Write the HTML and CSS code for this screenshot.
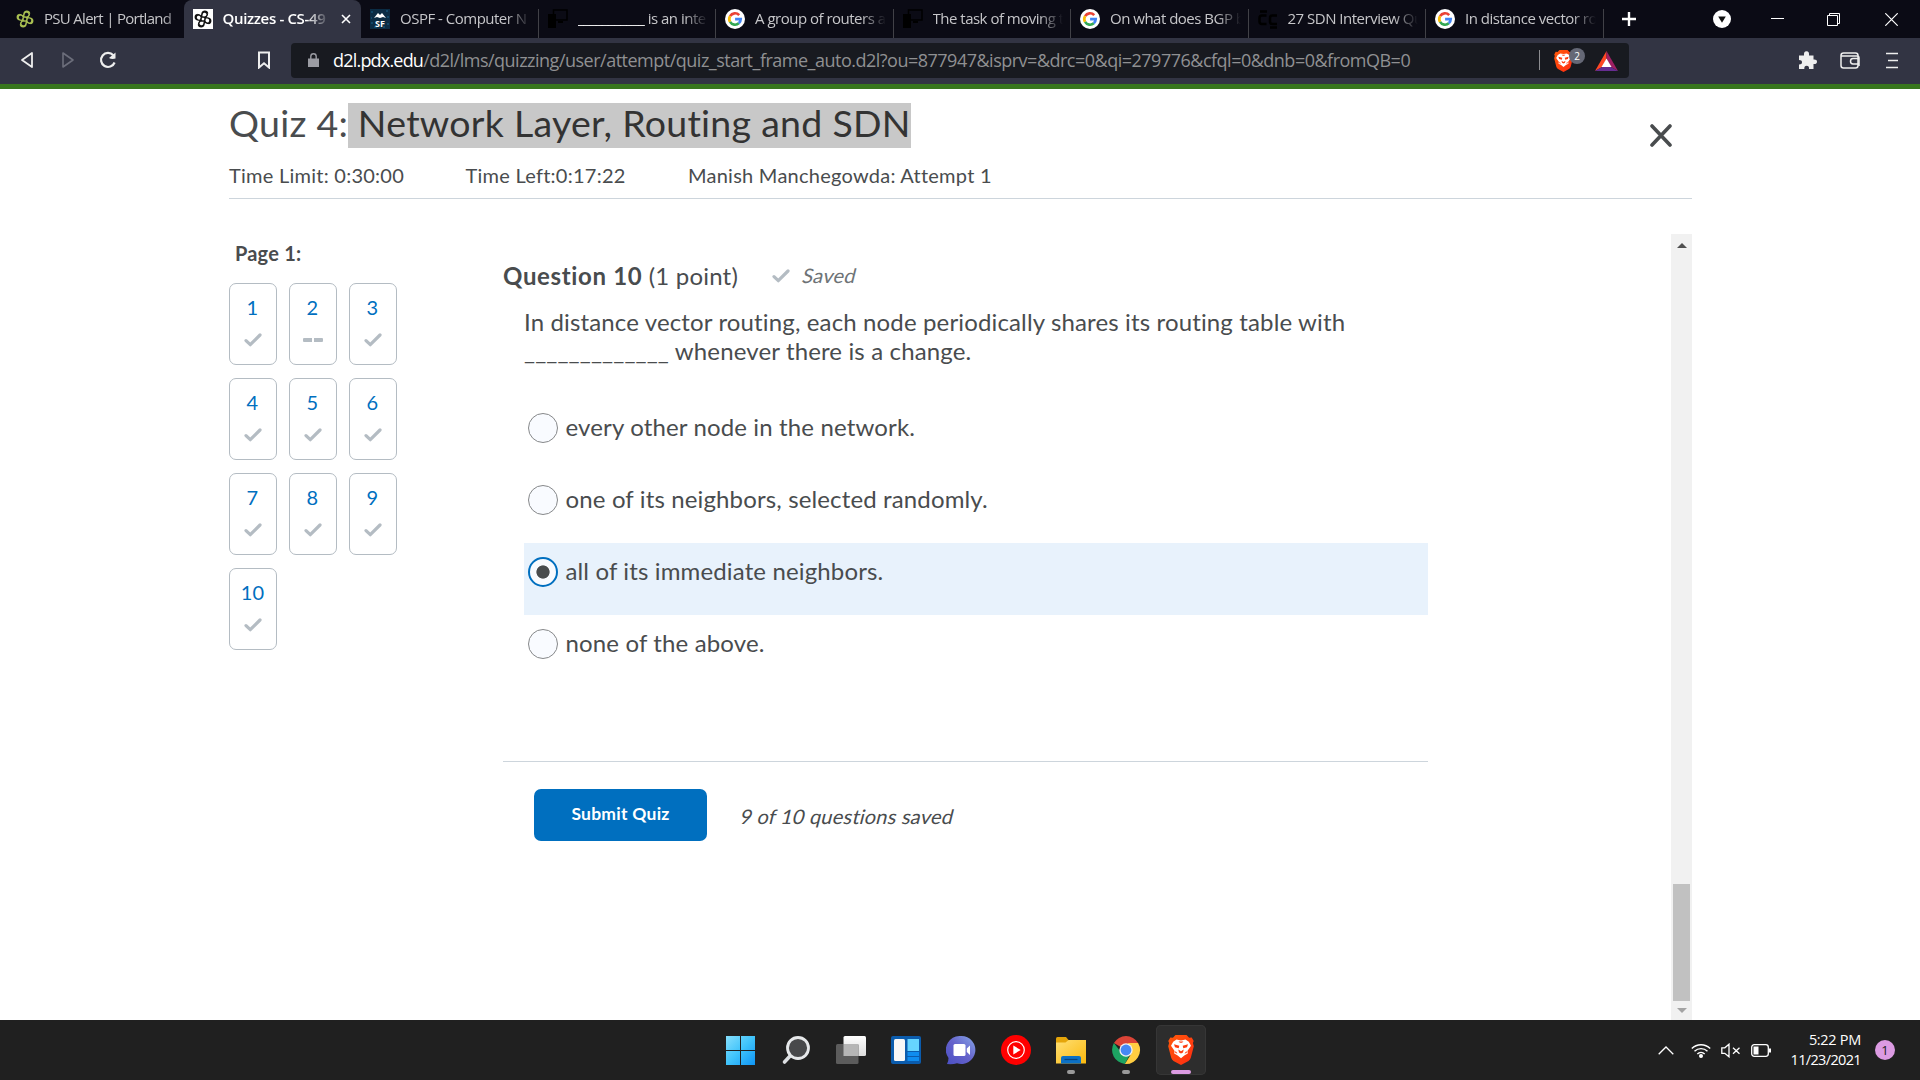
FILE: index.html
```html
<!DOCTYPE html>
<html lang="en">
<head>
<meta charset="utf-8">
<title>Quizzes - CS-49</title>
<link rel="stylesheet" href="styles.css">
</head>
<body>
<svg width="0" height="0" class="defs">
  <defs>
    <linearGradient id="win" x1="0" y1="0" x2="1" y2="1"><stop offset="0" stop-color="#86dffc"/><stop offset=".5" stop-color="#3fc3fb"/><stop offset="1" stop-color="#0f95f5"/></linearGradient>
    <linearGradient id="chat" x1="0" y1="1" x2="1" y2="0"><stop offset="0" stop-color="#4a4fc4"/><stop offset=".5" stop-color="#6562cb"/><stop offset="1" stop-color="#86a6e8"/></linearGradient>
    <linearGradient id="fold" x1="0" y1="0" x2="1" y2="1"><stop offset="0" stop-color="#ffdf74"/><stop offset="1" stop-color="#fbb90d"/></linearGradient>
    <linearGradient id="brv" x1="0" y1="0" x2="1" y2="1"><stop offset="0" stop-color="#ff5a0a"/><stop offset="1" stop-color="#ff2a12"/></linearGradient>
    <linearGradient id="paper" x1="0" y1="0" x2="0" y2="1"><stop offset="0" stop-color="#fff"/><stop offset="1" stop-color="#dcdcdc"/></linearGradient>
  </defs>
  <symbol id="google" viewBox="0 0 20 20"><circle cx="10" cy="10" r="10" fill="#fff"/><g fill="none" stroke-width="2.7"><path d="M14.2 6.1A5.7 5.7 0 0 0 5.1 7.1" stroke="#ea4335"/><path d="M5.1 7.1a5.7 5.7 0 0 0 0 5.8" stroke="#fbbc05"/><path d="M5.1 12.9a5.7 5.7 0 0 0 8.7 1.4" stroke="#34a853"/><path d="M13.8 14.3a5.7 5.7 0 0 0 1.9-4.2H10.1" stroke="#4285f4"/></g></symbol>
  <symbol id="knot" viewBox="0 0 20 20"><g fill="none" stroke="currentColor" stroke-width="1.5" transform="rotate(12 10 10)"><path d="M8 13V4.800a2.800 2.800 0 0 1 5.400-1M12 7v8.200a2.800 2.800 0 0 1-5.400 1M7 8h8.200a2.800 2.800 0 0 1 1 5.400M13 12H4.800a2.800 2.800 0 0 1-1-5.400M8 5a2.700 2.700 0 0 1 5.300 0q0 2-2.600 3.500M12 15a2.700 2.700 0 0 1-5.300 0q0-2 2.600-3.500M15 8a2.700 2.700 0 0 1 0 5.300q-2 0-3.500-2.600M5 12a2.700 2.700 0 0 1 0-5.300q2 0 3.500 2.600"/></g></symbol>
  <symbol id="devices" viewBox="0 0 20 20"><rect x="5.500" y="1" width="13.500" height="10" fill="none" stroke="#000" stroke-width="1.500"/><path d="M0 5h8v14H0zM10 12h5v2h-5z" fill="#000"/></symbol>
  <symbol id="check" viewBox="0 0 18 14"><path d="M2 7.600 6.300 11.700 16 2" fill="none" stroke="#b4bcc3" stroke-width="3.200" stroke-linecap="round" stroke-linejoin="round"/></symbol>
  <symbol id="lion" viewBox="0 0 26 30"><path d="M7.500 0h11l2.600 2.800 2.600-.4 2 3.600-.8 2 .9 3.200-3 11.500q-.6 2-2.300 3.200L13 30l-7.500-4.100q-1.700-1.200-2.300-3.200L.2 11.200l.9-3.200-.8-2 2-3.600 2.600.4z" fill="url(#brv)"/><path d="M8.500 4.600l4.500.8 4.500-.8 3.300 2.200 2.200 4-3.600 5.200.4 2.600-3.500 2-3.300 2.700-3.300-2.700-3.500-2 .4-2.600L3 10.800l2.200-4z" fill="#fff"/><path d="M6 9.300l5.300 1.400-.6 2.500-3.700-1zM20 9.300l-5.300 1.400.6 2.500 3.700-1zM10.300 14.500l2.700 1.800 2.700-1.800-.7 3-2 1-2-1zM7.500 16l2 2.500-2.300-.5zM18.500 16l-2 2.500 2.300-.5zM10.500 6.500h5l-1.500 1.200h-2z" fill="#ff3c10"/></symbol>
</svg>

<header class="browser">
  <div class="tabs">
    <div class="tab first"><svg class="fav psu"><use href="#knot"/></svg><span>PSU Alert | Portland</span></div>
    <div class="tab active"><svg class="fav psu-dark"><use href="#knot"/></svg><span>Quizzes - CS-49</span><svg class="tab-close" viewBox="0 0 10 10"><path d="M1 1l8 8M9 1 1 9"/></svg></div>
    <div class="tab"><svg class="fav" viewBox="0 0 20 20"><rect width="20" height="20" fill="#0b2c44"/><path d="M1 3h2M16 2h2M1 9h1M17 8h2M1 14h2M17 15h2M4 18h3M13 18h2" stroke="#18628c"/><path d="M4 9 8 4l2 2 2-2 4 5-3-1-3 1-3-1z" fill="#fff"/><text x="10" y="18" text-anchor="middle" class="sf">SF</text></svg><span>OSPF - Computer N</span></div>
    <div class="tab"><svg class="fav"><use href="#devices"/></svg><span><i class="blank">___________</i> is an inte</span></div>
    <div class="tab"><svg class="fav"><use href="#google"/></svg><span>A group of routers a</span></div>
    <div class="tab"><svg class="fav"><use href="#devices"/></svg><span>The task of moving t</span></div>
    <div class="tab"><svg class="fav"><use href="#google"/></svg><span>On what does BGP b</span></div>
    <div class="tab"><svg class="fav" viewBox="0 0 20 20"><path d="M8.500 6.500H4Q1.500 6.500 1.500 9v3.500Q1.500 15 4 15h4.500M19 6.500h-4.500Q12 6.500 12 9v3.500q0 2.500 2.500 2.500H19M2 2.500h7M12 18.500h7" fill="none" stroke="#000" stroke-width="2.500"/></svg><span>27 SDN Interview Qu</span></div>
    <div class="tab"><svg class="fav"><use href="#google"/></svg><span>In distance vector ro</span></div>
    <svg class="plus" viewBox="0 0 16 16"><path d="M8 1v14M1 8h14"/></svg>
    <div class="window-buttons">
      <svg width="18" height="18" viewBox="0 0 18 18"><circle cx="9" cy="9" r="9" fill="#fff"/><path d="M5.200 6.500h7.600L9 12.800z" fill="#111"/></svg>
      <svg width="13" height="14" viewBox="0 0 13 14"><path d="M0 6.500h13" stroke="#fff"/></svg>
      <svg width="13" height="13" viewBox="0 0 13 13" fill="none" stroke="#fff"><path d="M.5 2.500h10v10H.5zM2.500 2V.5h10v10H11"/></svg>
      <svg width="13" height="13" viewBox="0 0 13 13"><path d="M.3.3l12.400 12.400M12.700.3.3 12.700" stroke="#fff" stroke-width="1.200"/></svg>
    </div>
  </div>
  <div class="toolbar">
    <div class="nav">
      <svg width="14" height="18" viewBox="0 0 14 18"><path d="M12 2v14L2 9z" fill="none" stroke="#eee" stroke-width="1.800" stroke-linejoin="round"/></svg>
      <svg width="14" height="18" viewBox="0 0 14 18"><path d="M2 2v14l10-7z" fill="none" stroke="#6c6e7b" stroke-width="1.600" stroke-linejoin="round"/></svg>
      <svg width="18" height="18" viewBox="0 0 18 18"><path d="M14.300 4.300A7 7 0 1 0 15.600 11.500" fill="none" stroke="#eee" stroke-width="2.200"/><path d="M16.500 1.500v6q-3.500 1-6.500-.5z" fill="#eee"/></svg>
      <svg class="bookmark" width="14" height="18" viewBox="0 0 14 18"><path d="M2 1.500h10v15l-5-4.200-5 4.200z" fill="none" stroke="#eee" stroke-width="2"/></svg>
    </div>
    <div class="address">
      <svg class="lock" width="11" height="14" viewBox="0 0 11 14"><path d="M0 5.500h11V14H0z" fill="#9b9ca3"/><path d="M2.800 6V3.500a2.700 2.700 0 0 1 5.400 0V6" fill="none" stroke="#9b9ca3" stroke-width="1.400"/></svg>
      <span class="host">d2l.pdx.edu</span><span class="path">/d2l/lms/quizzing/user/attempt/quiz_start_frame_auto.d2l?ou=877947&amp;isprv=&amp;drc=0&amp;qi=279776&amp;cfql=0&amp;dnb=0&amp;fromQB=0</span>
      <div class="shields">
        <i class="rule"></i>
        <div class="shield"><svg width="19" height="22"><use href="#lion"/></svg><b>2</b></div>
        <svg class="bat" width="23" height="20" viewBox="0 0 23 20"><path d="M11.500 0 0 20l7-4 4.500-8z" fill="#ff4724"/><path d="M11.500 0 23 20l-7-4-4.500-8z" fill="#9e1f63"/><path d="M0 20h23l-7-4H7z" fill="#662d91"/><path d="M11.500 7.500 16.500 16h-10z" fill="#fff"/></svg>
      </div>
    </div>
    <div class="tools">
      <svg width="18" height="18" viewBox="0 0 18 18"><path d="M0 4.500h5q-.5-4.300 2.500-4.300T10 4.500h4.500v4q3.500-.3 3.500 2.200T14.500 13v5H10q.3-3.200-2.300-3.200T5.300 18H0v-4.500q3 .1 3-2.200T0 9z" fill="#eee"/></svg>
      <svg width="20" height="17" viewBox="0 0 20 17" fill="none" stroke="#eee" stroke-width="1.500"><rect x="1" y="1" width="17" height="15" rx="2.500"/><path d="M1 4h16q2 0 2 2v8M19 6.500h-6q-2.500 0-2.500 2.700T13 12h6"/></svg>
      <svg width="12" height="17" viewBox="0 0 12 17"><path d="M0 1.500h12M2 8.500h10M0 15.500h12" stroke="#eee" stroke-width="1.700"/></svg>
    </div>
  </div>
</header>

<main class="page">
  <section class="quiz-head">
    <div class="title-row">
      <h1><span>Quiz 4:</span><span class="selected">&nbsp;Network Layer, Routing and SDN</span></h1>
      <svg class="close" width="22" height="23" viewBox="0 0 22 23"><path d="M2 2l18 19M20 2 2 21" stroke="#494c4e" stroke-width="3.600" stroke-linecap="round"/></svg>
    </div>
    <div class="meta"><span class="limit">Time Limit: 0:30:00</span><span class="left">Time Left:0:17:22</span><span class="who">Manish Manchegowda: Attempt 1</span></div>
  </section>

  <div class="body">
    <aside>
      <h2>Page 1:</h2>
      <div class="cards">
        <a class="card">1<svg><use href="#check"/></svg></a>
        <a class="card">2<i class="dashes"></i></a>
        <a class="card">3<svg><use href="#check"/></svg></a>
        <a class="card">4<svg><use href="#check"/></svg></a>
        <a class="card">5<svg><use href="#check"/></svg></a>
        <a class="card">6<svg><use href="#check"/></svg></a>
        <a class="card">7<svg><use href="#check"/></svg></a>
        <a class="card">8<svg><use href="#check"/></svg></a>
        <a class="card">9<svg><use href="#check"/></svg></a>
        <a class="card">10<svg><use href="#check"/></svg></a>
      </div>
    </aside>
    <section class="question">
      <div class="q-head"><span class="q-title"><b>Question 10</b> (1 point)</span><svg width="18" height="14"><use href="#check"/></svg><em>Saved</em></div>
      <p class="q-text">In distance vector routing, each node periodically shares its routing table with<br><span class="gap">_____________</span> whenever there is a change.</p>
      <div class="options">
        <label class="option"><i class="radio"></i><span>every other node in the network.</span></label>
        <label class="option"><i class="radio"></i><span>one of its neighbors, selected randomly.</span></label>
        <label class="option chosen"><i class="radio"></i><span>all of its immediate neighbors.</span></label>
        <label class="option"><i class="radio"></i><span>none of the above.</span></label>
      </div>
      <div class="submit"><button>Submit Quiz</button><em>9 of 10 questions saved</em></div>
    </section>
    <div class="scrollbar"><i class="up"></i><i class="thumb"></i><i class="down"></i></div>
  </div>
</main>

<footer class="taskbar">
  <div class="apps">
    <div class="app"><svg viewBox="0 0 30 30"><path d="M0 1h14v14H0zM15 1h14v14H15zM0 16h14v14H0zM15 16h14v14H15z" fill="url(#win)"/></svg></div>
    <div class="app"><svg viewBox="0 0 30 30"><path d="M10.500 19.500 3.500 27" stroke="#dcdfe2" stroke-width="3.600" stroke-linecap="round"/><circle cx="17" cy="13" r="10.500" fill="#48494b" stroke="#e6e8ea" stroke-width="2.800"/></svg></div>
    <div class="app"><svg viewBox="0 0 30 30"><rect x="7.500" y="1" width="22.500" height="20" rx="1.500" fill="url(#paper)"/><rect y="9" width="22.500" height="20" rx="1.500" fill="#5c5c5c"/><path d="M7.500 9h15v12h-15z" fill="#b6b6b6"/></svg></div>
    <div class="app"><svg viewBox="0 0 30 30"><rect y="1" width="30" height="28" rx="2" fill="#0b5cad"/><rect x="3" y="4" width="11" height="22" rx="1.500" fill="#f7f7f7"/><path d="M16.500 4H28v12H16.500z" fill="#66d4ff"/><path d="M16.500 17H28v4H16.500zM16.500 22H28v4H16.500z" fill="#0f8df0"/></svg></div>
    <div class="app"><svg viewBox="0 0 30 30"><path d="M15.500 1a14 14 0 1 1-4.500 27.300Q7 29.500 1 29q1.500-2.500 1.500-6A14 14 0 0 1 15.500 1z" fill="url(#chat)"/><rect x="7.500" y="9" width="12" height="12" rx="1.500" fill="#fff"/><path d="M20.800 13.500 24 10.500v9.500l-3.200-3z" fill="#fff"/></svg></div>
    <div class="app"><svg viewBox="0 0 30 30"><circle cx="15" cy="15" r="15" fill="#f00"/><circle cx="15" cy="15" r="8.300" fill="none" stroke="#fff" stroke-width="1.200"/><path d="M12.300 10.500v9l7.400-4.500z" fill="#fff"/></svg></div>
    <div class="app"><svg viewBox="0 0 30 30"><path d="M0 3.500Q0 2 1.500 2H10l3 3.500-3 3H0z" fill="#e5a50a"/><path d="M0 7.500h9.500l3-2.500H30v23.500H0z" fill="url(#fold)"/><path d="M5 28.500V23q0-2 2-2h16q2 0 2 2v5.500z" fill="#0c70c4"/><path d="M8.500 24.500h13" stroke="#08437e" stroke-width="1.200"/></svg><i class="run"></i></div>
    <div class="app"><svg viewBox="0 0 30 30"><path d="M15 15 2.900 8a14 14 0 0 1 24.200 0z" fill="#db4437"/><path d="M2.900 8a14 14 0 0 0 11 20.900L19 19l-8-.5z" fill="#1da462"/><path d="M27.100 8a14 14 0 0 1-13.200 20.900L21 17.500 17 8z" fill="#ffcd41"/><circle cx="15" cy="15" r="6.700" fill="#f1f1f1"/><circle cx="15" cy="15" r="5.400" fill="#4688f4"/></svg><i class="run"></i></div>
    <div class="app current"><svg viewBox="-2 0 30 30"><use href="#lion" width="26" height="30"/></svg><i class="run"></i></div>
  </div>
  <div class="tray">
    <svg width="16" height="9" viewBox="0 0 16 9"><path d="M.7 8.300 8 1l7.300 7.300" fill="none" stroke="#fff" stroke-width="1.300"/></svg>
    <svg class="wifi" width="20" height="15" viewBox="0 0 20 15" fill="none" stroke="#fff" stroke-width="1.400"><path d="M.8 5.500a13 13 0 0 1 18.400 0M3.500 8.300a9.200 9.200 0 0 1 13 0M6.300 11a5.400 5.400 0 0 1 7.400 0"/><circle cx="10" cy="13" r="1.300" fill="#fff"/></svg>
    <svg class="vol" width="20" height="15" viewBox="0 0 20 15" fill="none" stroke="#fff" stroke-width="1.300"><path d="M.8 4.800h3L8 1.200v12.600l-4.200-3.500h-3zM12 4.700l6.500 6M18.500 4.700l-6.500 6"/></svg>
    <svg class="batt" width="21" height="13" viewBox="0 0 21 13"><rect x=".7" y=".7" width="16.600" height="11.600" rx="2.500" fill="none" stroke="#fff" stroke-width="1.300"/><path d="M2.500 2.500h5v8h-5zM18 4.500h2v4h-2z" fill="#fff"/></svg>
    <div class="clock"><span>5:22 PM</span><span>11/23/2021</span></div>
    <b class="notice">1</b>
  </div>
</footer>
</body>
</html>
```
FILE: styles.css
```css
* { box-sizing: border-box; }
body { margin: 0; width: 1920px; height: 1080px; overflow: hidden; display: flex; flex-direction: column; background: #fff; color: #494c4e; font-family: Lato, sans-serif; font-variant-ligatures: none; }
svg { display: block; flex: none; }
.defs { position: absolute; }
h1, h2, p { margin: 0; font-weight: 400; }

/* browser chrome */
.browser { height: 89px; flex: none; border-bottom: 5px solid #38761d; background: #323443; font-family: "Open Sans", sans-serif; }
.tabs { height: 38px; display: flex; align-items: center; padding-left: 6px; background: #0b0b15; }
.tab { width: 177.5px; height: 38px; flex: none; display: flex; align-items: center; padding: 0 8px 1px 9px; color: #c6c6c9; font-size: 15px; background: linear-gradient(#414147, #414147) right bottom / 1px 29px no-repeat; }
.tab span { flex: 1; min-width: 0; margin-left: 10px; padding-bottom: 2px; white-space: nowrap; line-height: 34px; letter-spacing: -.5px; -webkit-mask-image: linear-gradient(90deg, #000 calc(100% - 24px), transparent); mask-image: linear-gradient(90deg, #000 calc(100% - 24px), transparent); }
.tab.first { background: none; }
.tab.first span { margin-left: 9px; letter-spacing: -.7px; -webkit-mask-image: linear-gradient(90deg, #000 calc(100% - 14px), transparent calc(100% + 12px)); mask-image: linear-gradient(90deg, #000 calc(100% - 14px), transparent calc(100% + 12px)); }
.tab.active { background: #323443; color: #fff; font-weight: 600; border-radius: 8px 8px 0 0; }
.tab.active span { letter-spacing: -.35px; }
.fav { width: 20px; height: 20px; }
.psu { color: #a9bf52; }
.psu-dark { color: #111; background: #fff; }
.sf { font: bold 9px "Open Sans", sans-serif; fill: #fff; letter-spacing: 0; }
.blank { font-style: normal; color: #fff; }
.tab-close { width: 10px; height: 10px; margin: 0 2px 0 11px; stroke: #fff; stroke-width: 1.6; }
.plus { width: 16px; height: 16px; margin-left: 17px; stroke: #fff; stroke-width: 2.4; }
.window-buttons { margin-left: auto; display: flex; align-items: center; padding-right: 22px; }
.window-buttons svg:nth-child(2) { margin-left: 40px; }
.window-buttons svg:nth-child(3) { margin-left: 43px; }
.window-buttons svg:nth-child(4) { margin-left: 45px; }
.toolbar { height: 46px; display: flex; align-items: center; }
.nav { width: 291px; display: flex; align-items: center; padding: 0 0 2px 20px; }
.nav svg:nth-child(2) { margin-left: 27px; }
.nav svg:nth-child(3) { margin-left: 24px; }
.nav .bookmark { margin-left: 140px; }
.address { width: 1338px; height: 35px; margin-bottom: 1px; display: flex; align-items: center; padding: 0 0 1px 17px; border-radius: 4px; background: #181a20; font-size: 18px; line-height: 32px; white-space: nowrap; }
.host { margin-left: 14px; color: #fff; letter-spacing: -.8px; }
.path { color: #8f9092; letter-spacing: -.5px; }
.host, .path { padding-bottom: 1px; }
.shields { margin-left: auto; display: flex; align-items: center; padding-right: 11px; }
.rule { width: 1px; height: 20px; margin-right: 14px; background: #8b8c90; }
.shield { position: relative; margin-right: 22px; }
.shield b { position: absolute; left: 15px; top: -2px; width: 16px; height: 16px; border-radius: 8px; background: #656876; color: #fff; font-size: 10px; line-height: 16px; font-weight: 400; text-align: center; }
.shield, .bat { margin-top: 1px; }
.tools { margin-left: auto; display: flex; align-items: center; gap: 23px; padding: 0 22px 2px 0; }
.tools svg:last-child { margin-left: 3px; }

/* quiz header */
.page { flex: 1; display: flex; flex-direction: column; min-height: 0; padding-left: 229px; }
.quiz-head { width: 1463px; height: 110px; padding-top: 14px; border-bottom: 1px solid #cdd5dc; }
.title-row { display: flex; justify-content: space-between; align-items: flex-start; padding-right: 20px; }
h1 { display: flex; height: 45px; font-size: 37.5px; line-height: 39px; letter-spacing: .27px; white-space: nowrap; }
h1 span:first-child { width: 119px; }
.selected { width: 563px; background: #c8c8c8; color: #333; }
.close { margin-top: 21px; }
.meta { display: flex; margin-top: 15px; font-size: 20px; line-height: 24px; letter-spacing: .25px; white-space: nowrap; }
.limit { width: 236.5px; }
.left { width: 222.5px; }

/* quiz body */
.body { flex: 1; display: flex; width: 1463px; min-height: 0; }
aside { width: 274px; padding-top: 42px; }
h2 { margin-left: 6px; font-size: 20px; line-height: 24px; font-weight: 700; letter-spacing: .2px; }
.cards { display: grid; grid-template-columns: repeat(3, 48px); gap: 13px 12px; margin-top: 18px; }
.card { height: 82px; display: flex; flex-direction: column; align-items: center; padding: 11px 1px 0 0; border: 1px solid #b4bcc3; border-radius: 7px; color: #006fbf; font-size: 20px; line-height: 24px; letter-spacing: .2px; }
.card svg { width: 18px; height: 14px; margin: 14px 0 0 1px; }
.dashes { display: block; width: 20px; height: 4px; margin: 19px 0 0 1px; background: linear-gradient(90deg, #b4bcc3 9px, transparent 9px 11px, #b4bcc3 11px); border-radius: 1px; }
.question { width: 925px; }
.q-head { display: flex; align-items: center; height: 30px; margin-top: 62px; white-space: nowrap; }
.q-title { width: 269px; font-size: 24px; line-height: 30px; letter-spacing: .2px; }
.q-title b { letter-spacing: .65px; }
em { display: inline-block; font-style: normal; letter-spacing: .22px; transform: skewX(-14deg); }
.q-head em { margin: -2px 0 0 13px; font-size: 20px; color: #6e7376; }
.q-text { margin: 16px 0 0 21px; font-size: 24px; line-height: 29px; letter-spacing: .14px; white-space: nowrap; }
.options { margin: 34px 0 0 21px; }
.option { height: 72px; display: flex; padding: 14px 0 0 4px; font-size: 24px; line-height: 30px; letter-spacing: .14px; white-space: nowrap; }
.option span { margin: -1px 0 0 .5px; }
.chosen { background: #e8f2fc; }
.radio { width: 30px; height: 30px; margin-right: 7px; border: 1px solid #86888a; border-radius: 50%; background: #f9fbff; }
.chosen .radio { border: 2px solid #006fbf; background: radial-gradient(circle, #494c4e 6.2px, #f9fbff 7px); }
.submit { display: flex; align-items: flex-start; margin-top: 74px; padding: 27px 0 0 31px; border-top: 1px solid #cdd5dc; }
button { width: 173px; height: 52px; padding: 0 0 3px; border: 0; border-radius: 7px; background: #006fbf; color: #fff; font: 700 17.5px Lato, sans-serif; letter-spacing: .25px; }
.submit em { margin: 15px 0 0 34px; font-size: 20px; line-height: 24px; white-space: nowrap; }
.scrollbar { width: 21px; height: 786px; margin: 35px 0 0 auto; display: flex; flex-direction: column; align-items: center; background: #f1f1f1; }
.up, .down { width: 0; border: 5px solid transparent; }
.up { margin-top: 4px; border-bottom-color: #505050; }
.thumb { width: 17px; height: 117px; margin: 636px 0 0; background: #c1c1c1; }
.down { margin-top: 7px; border-top-color: #a3a3a3; }

/* taskbar */
.taskbar { position: relative; height: 60px; flex: none; display: flex; justify-content: flex-end; background: #202020; color: #fff; font-family: "Open Sans", sans-serif; }
.apps { display: flex; gap: 5px; margin-right: auto; padding: 5px 0 0 716px; }
.app { width: 50px; height: 50px; display: flex; flex-direction: column; align-items: center; justify-content: space-between; padding: 10px 0 1px; border-radius: 5px; }
.app svg { width: 30px; height: 30px; }
.run { width: 8px; height: 4px; border-radius: 2px; background: #9a9a9a; }
.current { background: #2d2d2d; box-shadow: inset 0 0 0 1px #363636; }
.current .run { width: 20px; background: #dc9be2; }
.tray { display: flex; align-items: center; padding-right: 25px; }
.wifi { margin-left: 17px; }
.vol { margin-left: 10px; }
.batt { margin-left: 10px; }
.clock { width: 89px; display: flex; flex-direction: column; align-items: flex-end; font-size: 14.5px; line-height: 20px; letter-spacing: -.65px; }
.clock span:first-child { letter-spacing: -.3px; }
.notice { width: 20px; height: 20px; margin-left: 14px; border-radius: 50%; background: #dc9be2; color: #222; font-size: 13px; line-height: 20px; font-weight: 400; text-align: center; }
```
